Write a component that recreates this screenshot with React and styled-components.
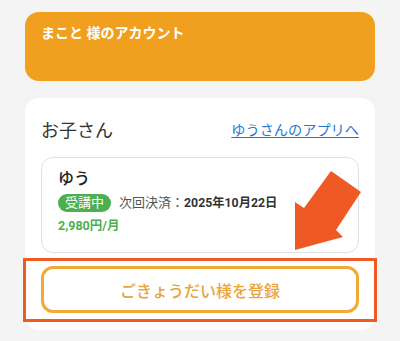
import React from 'react';
import styled, { createGlobalStyle } from 'styled-components';

const Global = createGlobalStyle`
  body {
    margin: 0;
    background: #f4f4f4;
    font-family: Roboto, 'Noto Sans CJK JP', 'Noto Sans', sans-serif;
  }
`;

const colors = {
  orange: '#f0a01e',
  red: '#ef5a24',
  green: '#4caf50',
  blue: '#1e78d2',
  text: '#333',
  gray: '#555',
};

const Page = styled.div`
  padding: 12px 25px;
  display: flex;
  flex-direction: column;
  gap: 17px;
`;

const AccountCard = styled.div`
  background: ${colors.orange};
  border-radius: 14px;
  height: 69px;
  box-sizing: border-box;
  padding: 11px 16px;
  color: #fff;
  font-size: 14px;
  font-weight: 700;
  line-height: 20px;
`;

const Card = styled.div`
  position: relative;
  background: #fff;
  border-radius: 14px;
  padding: 18px 16px 8px;
`;

const Header = styled.div`
  display: flex;
  align-items: center;
  justify-content: space-between;
  height: 26px;
  margin-bottom: 15px;
  h2 {
    margin: 0;
    font-size: 18px;
    font-weight: 400;
    color: ${colors.text};
  }
  a {
    color: ${colors.blue};
    font-size: 14.2px;
    text-decoration: underline;
    text-underline-offset: 2px;
  }
`;

const ChildCard = styled.div`
  border: 1px solid #e0e0e0;
  border-radius: 12px;
  padding: 10px 16px 16px;
  display: flex;
  flex-direction: column;
  gap: 4px;
`;

const Name = styled.div`
  font-size: 16px;
  font-weight: 500;
  line-height: 22px;
  color: #222;
`;

const Row = styled.div`
  display: flex;
  align-items: center;
  gap: 8px;
  font-size: 13px;
  color: ${colors.gray};
  line-height: 18px;
  b {
    color: ${colors.text};
    font-size: 12.3px;
    font-weight: 700;
  }
`;

const Badge = styled.span`
  background: ${colors.green};
  color: #fff;
  border-radius: 9px;
  padding: 0 7px;
  font-size: 13px;
  line-height: 18px;
`;

const Price = styled.div`
  color: ${colors.green};
  font-weight: 700;
  font-size: 12.5px;
  line-height: 20px;
`;

const Highlight = styled.div`
  margin: 5px -18px 0;
  border: 3px solid ${colors.red};
  padding: 5px 15px 6px;
`;

const RegisterButton = styled.button`
  width: 100%;
  height: 47px;
  background: #fff;
  border: 3px solid #f0aa35;
  border-radius: 12px;
  color: #e9a43c;
  font-family: inherit;
  font-size: 16px;
  font-weight: 500;
  cursor: pointer;
`;

const Arrow = styled.svg`
  position: absolute;
  left: 270px;
  top: 72px;
  width: 67px;
  height: 80px;
`;

export default function App() {
  return (
    <>
      <Global />
      <Page>
        <AccountCard>まこと 様のアカウント</AccountCard>
        <Card>
          <Header>
            <h2>お子さん</h2>
            <a href="#">ゆうさんのアプリへ</a>
          </Header>
          <ChildCard>
            <Name>ゆう</Name>
            <Row>
              <Badge>受講中</Badge>
              <span>次回決済：<b>2025年10月22日</b></span>
            </Row>
            <Price>2,980円/月</Price>
          </ChildCard>
          <Highlight>
            <RegisterButton>ごきょうだい様を登録</RegisterButton>
          </Highlight>
          <Arrow viewBox="0 0 67 80">
            <polygon points="36,1 66,22 41,60 48,67 0,80 0,32 9,38" fill={colors.red} />
          </Arrow>
        </Card>
      </Page>
    </>
  );
}
